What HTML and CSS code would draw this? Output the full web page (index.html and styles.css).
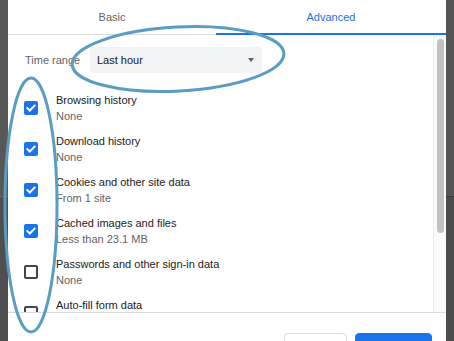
FILE: index.html
```html
<!DOCTYPE html>
<html lang="en">
<head>
<meta charset="utf-8">
<title>Clear browsing data</title>
<link rel="stylesheet" href="styles.css">
</head>
<body>
<div class="stage">
  <div class="strip strip-left"></div>
  <div class="dialog">
    <div class="tabs">
      <div class="tab">Basic</div>
      <div class="tab tab-active">Advanced</div>
    </div>
    <div class="content">
      <div class="scroll-area">
        <div class="time-row">
          <span class="time-label">Time range</span>
          <div class="select">
            <span class="select-value">Last hour</span>
            <span class="select-arrow"></span>
          </div>
        </div>
        <ul class="options">
          <li class="option">
            <span class="checkbox checked"><svg viewBox="0 0 14 14"><path d="M3.4 7.1 L5.8 9.5 L10.6 4.6"/></svg></span>
            <div class="option-text"><div class="option-title">Browsing history</div><div class="option-sub">None</div></div>
          </li>
          <li class="option">
            <span class="checkbox checked"><svg viewBox="0 0 14 14"><path d="M3.4 7.1 L5.8 9.5 L10.6 4.6"/></svg></span>
            <div class="option-text"><div class="option-title">Download history</div><div class="option-sub">None</div></div>
          </li>
          <li class="option">
            <span class="checkbox checked"><svg viewBox="0 0 14 14"><path d="M3.4 7.1 L5.8 9.5 L10.6 4.6"/></svg></span>
            <div class="option-text"><div class="option-title">Cookies and other site data</div><div class="option-sub">From 1 site</div></div>
          </li>
          <li class="option">
            <span class="checkbox checked"><svg viewBox="0 0 14 14"><path d="M3.4 7.1 L5.8 9.5 L10.6 4.6"/></svg></span>
            <div class="option-text"><div class="option-title">Cached images and files</div><div class="option-sub">Less than 23.1 MB</div></div>
          </li>
          <li class="option">
            <span class="checkbox"></span>
            <div class="option-text"><div class="option-title">Passwords and other sign-in data</div><div class="option-sub">None</div></div>
          </li>
          <li class="option">
            <span class="checkbox"></span>
            <div class="option-text"><div class="option-title">Auto-fill form data</div><div class="option-sub">None</div></div>
          </li>
        </ul>
      </div>
      <div class="scrollbar"><div class="thumb"></div></div>
    </div>
    <div class="footer">
      <button class="btn btn-cancel">Cancel</button>
      <button class="btn btn-primary">Clear data</button>
    </div>
  </div>
  <div class="strip strip-right"></div>

  <svg class="annotations" width="454" height="341" viewBox="0 0 454 341">
    <ellipse cx="178" cy="59" rx="106" ry="32" transform="rotate(-3 178 59)"/>
    <ellipse cx="31" cy="205" rx="26" ry="127"/>
  </svg>
</div>
</body>
</html>
```

FILE: styles.css
```css
* { box-sizing: border-box; }

html, body {
  margin: 0;
  padding: 0;
  width: 454px;
  height: 341px;
  overflow: hidden;
  background: #4d4d4d;
  font-family: "Liberation Sans", Arial, sans-serif;
  font-size: 11px;
}

.stage {
  position: relative;
  display: flex;
  width: 454px;
  height: 341px;
}

.strip {
  flex: 0 0 8px;
  height: 341px;
}

.strip-left {
  background: linear-gradient(to bottom, #575757 0, #575757 196px, #6a6a6a 196px, #6a6a6a 197px, #4f4f4f 197px);
}

.strip-right {
  background: linear-gradient(to bottom, #555555 0, #555555 196px, #3a3a3a 196px, #3a3a3a 197px, #4c4c4c 197px);
}

.dialog {
  flex: 0 0 438px;
  height: 341px;
  background: #ffffff;
  display: flex;
  flex-direction: column;
  overflow: hidden;
}

/* Tabs */
.tabs {
  display: grid;
  grid-template-columns: 208px 1fr;
  height: 35px;
  border-bottom: 1px solid #dadce0;
  flex: 0 0 auto;
}

.tab {
  height: 34px;
  line-height: 34px;
  text-align: center;
  color: #5f6368;
  font-size: 11px;
}

.tab-active {
  color: #1a73e8;
  height: 35px;
  margin-bottom: -1px;
  box-shadow: inset 0 -2px 0 #1a73e8;
}

/* Content */
.content {
  display: flex;
  height: 278px;
  border-bottom: 1px solid #dadce0;
  flex: 0 0 auto;
  overflow: hidden;
}

.scroll-area {
  flex: 1 1 auto;
  padding: 12px 0 0 16px;
  overflow: hidden;
}

.time-row {
  display: flex;
  align-items: center;
  height: 26px;
}

.time-label {
  color: #5f6368;
  line-height: 16px;
  margin-left: 1px;
  width: 65px;
}

.select {
  width: 172px;
  height: 26px;
  background: #f1f3f4;
  border-radius: 3px;
  display: flex;
  align-items: center;
  justify-content: space-between;
  padding: 0 8px 0 7px;
}

.select-value {
  color: #202124;
  line-height: 16px;
}

.select-arrow {
  width: 0;
  height: 0;
  border-left: 3.5px solid transparent;
  border-right: 3.5px solid transparent;
  border-top: 4px solid #5f6368;
}

.options {
  list-style: none;
  margin: 14px 0 0 0;
  padding: 0;
}

.option {
  display: flex;
  align-items: center;
  height: 41px;
}

.checkbox {
  flex: 0 0 14px;
  width: 14px;
  height: 14px;
  border: 2px solid #444746;
  border-radius: 2px;
  background: #fff;
  margin-top: 1px;
  display: flex;
}

.checkbox.checked {
  background: #1a73e8;
  border-color: #1a73e8;
}

.checkbox svg {
  width: 14px;
  height: 14px;
  margin: -2px;
  fill: none;
  stroke: #ffffff;
  stroke-width: 2;
  stroke-linecap: square;
}

.option-text {
  margin-left: 18px;
  line-height: 16px;
}

.option-title { color: #202124; }
.option-sub { color: #5f6368; }

/* Scrollbar */
.scrollbar {
  flex: 0 0 13px;
  background: #fafafa;
  border-left: 1px solid #ececec;
  padding: 4px 2px 0 3px;
}

.thumb {
  width: 7px;
  height: 194px;
  border-radius: 4px;
  background: #c1c1c1;
}

/* Footer */
.footer {
  display: flex;
  justify-content: flex-end;
  gap: 8px;
  padding: 20px 14px 0 0;
}

.btn {
  font-family: "Liberation Sans", Arial, sans-serif;
  font-size: 11px;
  height: 32px;
  border-radius: 4px;
  padding: 0;
  flex: 0 0 auto;
}

.btn-cancel {
  width: 63px;
  background: #fff;
  border: 1px solid #dadce0;
  color: #1a73e8;
}

.btn-primary {
  width: 77px;
  background: #1a73e8;
  border: 1px solid #1a73e8;
  color: #fff;
}

/* Annotation overlay */
.annotations {
  position: absolute;
  left: 0;
  top: 0;
  pointer-events: none;
}

.annotations ellipse {
  fill: none;
  stroke: #5a9cc2;
  stroke-width: 3;
}
```
